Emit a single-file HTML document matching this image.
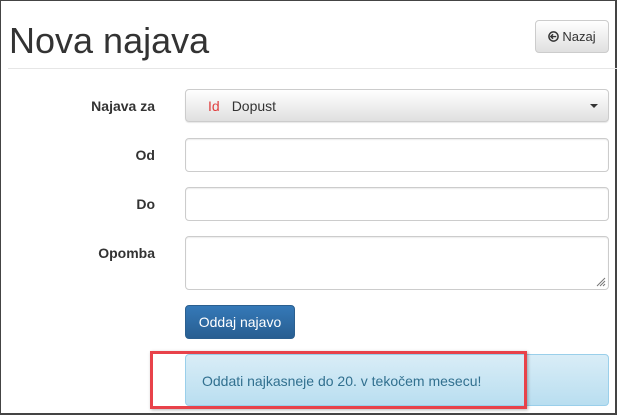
<!DOCTYPE html>
<html><head><style>
body{margin:0;width:617px;height:415px;overflow:hidden;background:#fff;font-family:"Liberation Sans",sans-serif;color:#333;position:relative}
.frame{position:absolute;left:0;top:0;width:614px;height:412px;border:1px solid #444;border-right-width:2px;border-bottom-width:2px}
.abs{position:absolute;box-sizing:border-box}
h1{position:absolute;left:9px;top:19px;margin:0;font-size:36px;font-weight:normal;line-height:44px;color:#333}
.hr{left:8px;top:68px;width:609px;height:1px;background:#e6e6e6}
.btn{border:1px solid #ccc;border-radius:4px;background:linear-gradient(#fff,#e0e0e0);font-size:13px;display:flex;align-items:center;justify-content:center}
.lbl{font-weight:bold;font-size:14px;text-align:right;width:150px;left:5px}
.inp{left:185px;width:424px;border:1px solid #ccc;border-radius:4px;background:#fff;box-shadow:inset 0 1px 1px rgba(0,0,0,.075)}
</style></head><body>
<div class="frame"></div>
<h1>Nova najava</h1>
<div class="abs btn" style="left:535px;top:20px;width:74px;height:33px"><svg width="11" height="11" viewBox="0 0 12 12" style="margin-right:3px"><circle cx="6" cy="6" r="5" fill="none" stroke="#333" stroke-width="1.6"/><path d="M3 6h6M5.5 3.5L3 6l2.5 2.5" fill="none" stroke="#333" stroke-width="1.5"/></svg>Nazaj</div>
<div class="abs hr"></div>
<div class="abs lbl" style="top:98px">Najava za</div>
<div class="abs btn" style="left:185px;top:89px;width:424px;height:33px;justify-content:flex-start;font-size:14px;box-shadow:0 1px 1px rgba(0,0,0,.1)"><span style="color:#e04040;margin-left:22px">Id</span><span style="margin-left:12px">Dopust</span><span style="position:absolute;right:10px;top:14px;border-left:4px solid transparent;border-right:4px solid transparent;border-top:4px solid #333"></span></div>
<div class="abs lbl" style="top:147px">Od</div>
<div class="abs inp" style="top:138px;height:34px"></div>
<div class="abs lbl" style="top:196px">Do</div>
<div class="abs inp" style="top:187px;height:34px"></div>
<div class="abs lbl" style="top:245px">Opomba</div>
<div class="abs inp" style="top:236px;height:54px"><svg width="10" height="10" style="position:absolute;right:2px;bottom:2px"><path d="M9 1L1 9M9 4L4 9M9 7L7 9" stroke="#777" stroke-width="1"/></svg></div>
<div class="abs" style="left:185px;top:305px;width:110px;height:34px;border:1px solid #2b5f8f;border-radius:4px;background:linear-gradient(#3579b8,#285e91);color:#fff;font-size:14px;display:flex;align-items:center;justify-content:center">Oddaj najavo</div>
<div class="abs" style="left:185px;top:354px;width:424px;height:52px;border:1px solid #9acfea;border-radius:4px;background:linear-gradient(#d9edf7,#b9def0);color:#31708f;font-size:14px;padding:18px 0 0 16px">Oddati najkasneje do 20. v tekočem mesecu!</div>
<div class="abs" style="left:150px;top:351px;width:377px;height:58px;border:3px solid #e8424a;box-shadow:1px 1px 3px rgba(0,0,0,.3)"></div>
</body></html>
